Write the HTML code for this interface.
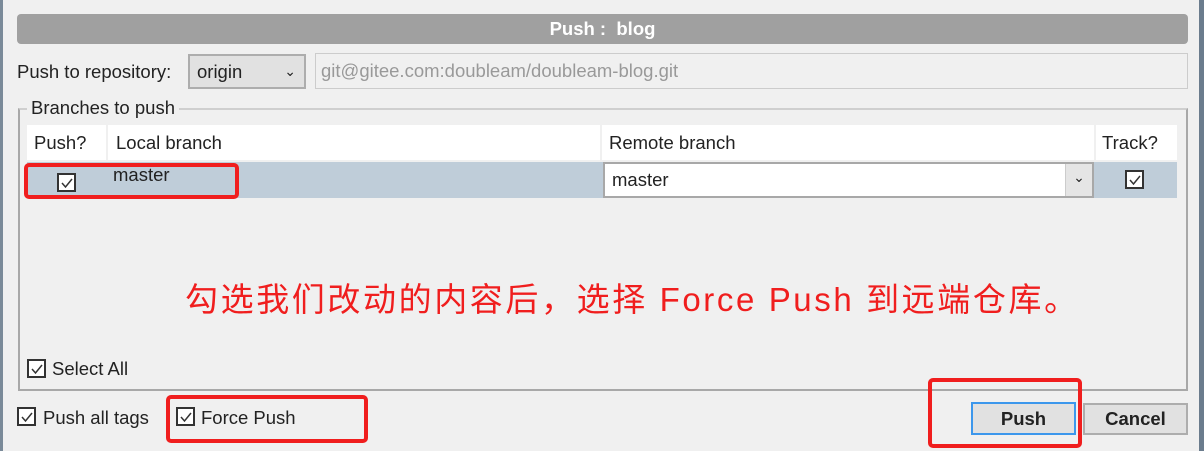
<!DOCTYPE html>
<html><head><meta charset="utf-8"><style>
*{box-sizing:border-box;margin:0;padding:0}
body{width:1204px;height:451px;background:#f0f0f0;font-family:"Liberation Sans","Noto Sans CJK SC",sans-serif;font-size:18.5px;color:#222;position:relative;overflow:hidden}
.a{position:absolute}
.cb{position:absolute;width:19px;height:19px;border:2px solid #333;background:#fff}
.cb svg{position:absolute;left:1px;top:1px}
.red{position:absolute;border:4px solid #f01e1e;border-radius:5px}
</style></head><body>
<div class="a" style="left:0;top:0;width:3px;height:451px;background:#7a8a99"></div>
<div class="a" style="left:1199px;top:0;width:5px;height:451px;background:#6b7c8d"></div>
<div class="a" style="left:17px;top:14px;width:1171px;height:30px;background:#a0a0a0;border-radius:4px;color:#fff;font-weight:bold;text-align:center;line-height:30px">Push :&nbsp; blog</div>
<div class="a" style="left:17px;top:61px">Push to repository:</div>
<div class="a" style="left:188px;top:54px;width:118px;height:35px;border:2px solid #adadad;background:#e1e1e1;padding-left:7px;line-height:31px">origin<span class="a" style="right:8px;top:0;font-size:14px">&#8964;</span></div>
<div class="a" style="left:315px;top:53px;width:873px;height:36px;border:1px solid #ccc;background:#f0f0f0;color:#999;padding-left:5px;line-height:34px">git@gitee.com:doubleam/doubleam-blog.git</div>
<div class="a" style="left:18px;top:108px;width:1170px;height:283px;border:2px solid #a8a8a8;border-top-color:#cfcfcf"></div>
<div class="a" style="left:27px;top:97px;background:#f0f0f0;padding:0 4px">Branches to push</div>
<div class="a" style="left:27px;top:125px;width:1150px;height:35px;background:#fff"></div>
<div class="a" style="left:106px;top:125px;width:2px;height:35px;background:#f0f0f0"></div>
<div class="a" style="left:600px;top:125px;width:2px;height:35px;background:#f0f0f0"></div>
<div class="a" style="left:1094px;top:125px;width:2px;height:35px;background:#f0f0f0"></div>
<div class="a" style="left:34px;top:132px">Push?</div>
<div class="a" style="left:116px;top:132px">Local branch</div>
<div class="a" style="left:609px;top:132px">Remote branch</div>
<div class="a" style="left:1102px;top:132px">Track?</div>
<div class="a" style="left:27px;top:162px;width:1150px;height:36px;background:#bfcdd9"></div>
<div class="cb" style="left:57px;top:173px"><svg width="14" height="14"><path d="M2 7l3.5 4L12 3" stroke="#333" stroke-width="1.5" fill="none"/></svg></div>
<div class="a" style="left:113px;top:164px">master</div>
<div class="a" style="left:603px;top:162px;width:491px;height:36px;border:2px solid #a8a8a8;background:#fff;padding-left:7px;line-height:32px">master</div>
<div class="a" style="left:1065px;top:164px;width:27px;height:32px;background:#e5e5e5;border-left:1px solid #ccc;text-align:center;font-size:14px;line-height:26px">&#8964;</div>
<div class="cb" style="left:1125px;top:170px"><svg width="14" height="14"><path d="M2 7l3.5 4L12 3" stroke="#333" stroke-width="1.5" fill="none"/></svg></div>
<div class="red" style="left:24px;top:163px;width:215px;height:36px"></div>
<div class="a" style="left:185px;top:273px;color:#f01e1e;font-size:33px;letter-spacing:2.6px;white-space:nowrap">勾选我们改动的内容后，选择 Force Push 到远端仓库。</div>
<div class="cb" style="left:27px;top:359px"><svg width="14" height="14"><path d="M2 7l3.5 4L12 3" stroke="#333" stroke-width="1.5" fill="none"/></svg></div>
<div class="a" style="left:52px;top:358px">Select All</div>
<div class="cb" style="left:17px;top:407px"><svg width="14" height="14"><path d="M2 7l3.5 4L12 3" stroke="#333" stroke-width="1.5" fill="none"/></svg></div>
<div class="a" style="left:43px;top:407px">Push all tags</div>
<div class="cb" style="left:176px;top:407px"><svg width="14" height="14"><path d="M2 7l3.5 4L12 3" stroke="#333" stroke-width="1.5" fill="none"/></svg></div>
<div class="a" style="left:201px;top:407px">Force Push</div>
<div class="red" style="left:166px;top:395px;width:202px;height:48px"></div>
<div class="a" style="left:971px;top:402px;width:105px;height:33px;border:2px solid #3c97ec;background:#e1e1e1;text-align:center;line-height:29px;font-weight:bold">Push</div>
<div class="a" style="left:1083px;top:403px;width:105px;height:32px;border:2px solid #adadad;background:#e1e1e1;text-align:center;line-height:28px;font-weight:bold">Cancel</div>
<div class="red" style="left:928px;top:378px;width:154px;height:70px"></div>
</body></html>
